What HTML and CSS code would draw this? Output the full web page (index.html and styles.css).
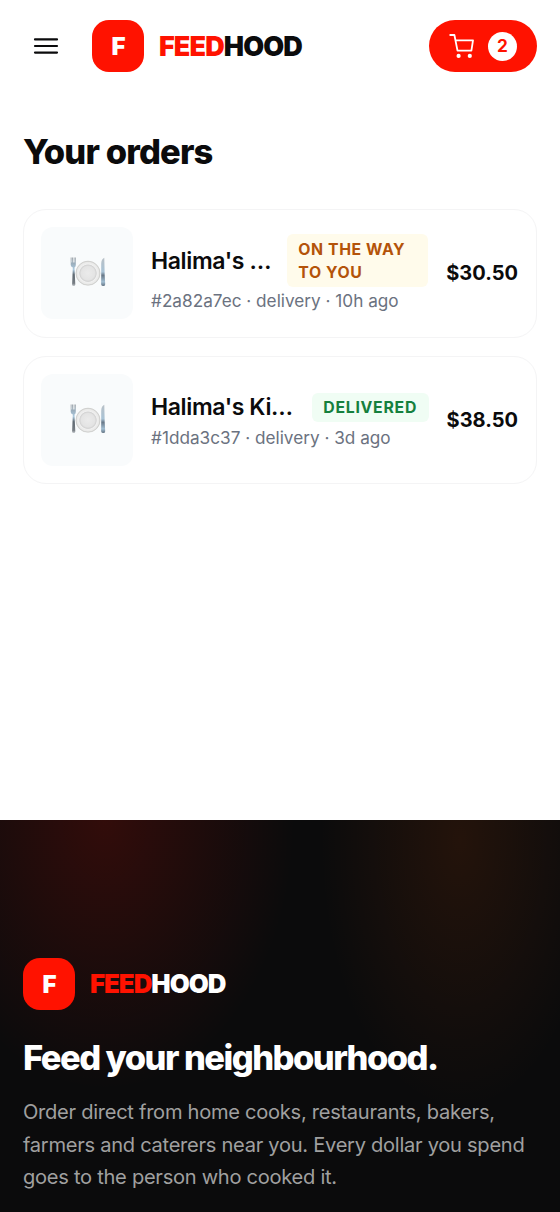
FILE: index.html
```html
<!DOCTYPE html>
<html lang="en">
<head>
<meta charset="utf-8">
<title>Your orders · Feedhood</title>
<link rel="stylesheet" href="styles.css">
</head>
<body>
<header class="topbar">
  <button class="menu" aria-label="Menu">
    <svg width="34" height="34" viewBox="0 0 34 34" fill="none" stroke="currentColor" stroke-width="2.2" stroke-linecap="round"><path d="M6 10.4h22M6 17h22M6 23.6h22"/></svg>
  </button>
  <a class="brand"><span class="mark">F</span><span class="word"><span class="red">FEED</span>HOOD</span></a>
  <button class="cart" aria-label="Cart">
    <svg width="26" height="26" viewBox="0 0 26 26" fill="none" stroke="currentColor" stroke-width="1.8" stroke-linecap="round" stroke-linejoin="round"><path d="M1.2 2h4.2l3.1 15.6h13.9L24 7.4H6.6"/><circle cx="9.6" cy="22.9" r="2.1" fill="currentColor" stroke="none"/><circle cx="20.8" cy="22.9" r="2.1" fill="currentColor" stroke="none"/></svg>
    <span class="count">2</span>
  </button>
</header>
<main class="orders">
  <h1 class="title">Your orders</h1>
  <article class="card">
    <div class="thumb">
      <svg class="plate" width="36" height="36" viewBox="0 0 36 36"><use href="#place-setting"/></svg>
    </div>
    <div class="info">
      <div class="line"><h2 class="name">Halima's Kitchen</h2><span class="badge badge-way">On the way to you</span></div>
      <p class="meta">#2a82a7ec · delivery · 10h ago</p>
    </div>
    <div class="price">$30.50</div>
  </article>
  <article class="card">
    <div class="thumb">
      <svg class="plate" width="36" height="36" viewBox="0 0 36 36">
        <defs>
          <linearGradient id="steel" x1="0" y1="0" x2="0" y2="1"><stop offset="0" stop-color="#8b939a"/><stop offset=".42" stop-color="#abc9df"/><stop offset=".6" stop-color="#606a73"/><stop offset=".9" stop-color="#777d83"/><stop offset="1" stop-color="#c4c8cc"/></linearGradient>
          <linearGradient id="blade" x1="0" y1="0" x2="0" y2="1"><stop offset="0" stop-color="#b9c0c6"/><stop offset=".5" stop-color="#a9c3d6"/><stop offset=".62" stop-color="#687888"/><stop offset=".85" stop-color="#a3bfd3"/><stop offset="1" stop-color="#637281"/></linearGradient>
          <radialGradient id="china"><stop offset="0" stop-color="#ebebeb"/><stop offset=".55" stop-color="#e4e4e4"/><stop offset=".68" stop-color="#d8d8d8"/><stop offset=".74" stop-color="#f0f0f0"/><stop offset=".9" stop-color="#e9e9e8"/><stop offset="1" stop-color="#cfcfcd"/></radialGradient>
          <g id="place-setting">
            <circle cx="18" cy="18.2" r="12.1" fill="url(#china)" stroke="#c4c4c2" stroke-width=".5"/>
            <circle cx="18" cy="18.2" r="8.2" fill="none" stroke="#d0d0d0" stroke-width=".5"/>
            <path d="M.7 2.6h.8v5h.7V2.6h.8v5h.7V2.6h.8v5h.6V2.6h.7v7.5q0 1.8-1.3 2.3l.8 17.1q0 1.6-1.6 1.6t-1.6-1.6l.7-17.1Q.7 12 .7 10.1z" fill="url(#steel)"/>
            <path d="M31.2 20.3V9q0-5 3.1-6.3l.4 17.2.5 9.3q0 1.9-1.9 1.9t-2.2-1.9z" fill="url(#blade)"/>
          </g>
        </defs>
        <use href="#place-setting"/>
      </svg>
    </div>
    <div class="info">
      <div class="line"><h2 class="name">Halima's Kitchen</h2><span class="badge badge-done">Delivered</span></div>
      <p class="meta">#1dda3c37 · delivery · 3d ago</p>
    </div>
    <div class="price">$38.50</div>
  </article>
</main>
<footer class="footer">
  <a class="brand"><span class="mark">F</span><span class="word word-small"><span class="red">FEED</span>HOOD</span></a>
  <h2 class="tagline">Feed your neighbourhood.</h2>
  <p class="blurb">Order direct from home cooks, restaurants, bakers, farmers and caterers near you. Every dollar you spend goes to the person who cooked it.</p>
</footer>
</body>
</html>
```

FILE: styles.css
```css
* { box-sizing: border-box; }
html, body, h1, h2, p { margin: 0; }
body { height: 1212px; overflow: hidden; display: flex; flex-direction: column; background: #fff; color: #0b0b0c; font-family: Inter, "Liberation Sans", sans-serif; }
button { font: inherit; border: 0; background: none; padding: 0; color: inherit; }
.topbar { height: 92px; flex: none; padding: 0 23px 0 29px; display: flex; align-items: center; }
.menu { display: flex; margin-right: 29px; }
.brand { display: flex; align-items: center; gap: 15px; }
.mark { width: 52px; height: 52px; border-radius: 17px; background: #ff1200; color: #fff; display: flex; align-items: center; justify-content: center; padding-left: 1px; font-size: 24px; font-weight: 900; }
.word { font-size: 27px; line-height: 32px; padding-top: 2px; font-weight: 900; letter-spacing: -.9px; }
.word-small { font-size: 25.8px; letter-spacing: -1px; padding-top: 0; }
.red { color: #ff1200; }
.cart { margin-left: auto; width: 108px; height: 52px; border-radius: 26px; padding: 0 20px; background: #ff1200; color: #fff; display: flex; align-items: center; justify-content: space-between; }
.count { width: 29px; height: 29px; border-radius: 50%; background: #fff; color: #ff1200; display: flex; align-items: center; justify-content: center; font-size: 17.2px; font-weight: 700; padding-bottom: 1px; }
.orders { flex: none; height: 728px; padding: 38px 23px 0; display: flex; flex-direction: column; gap: 18px; }
.title { font-size: 34.5px; line-height: 43px; font-weight: 800; letter-spacing: -.86px; margin-bottom: 18px; }
.card { height: 128.5px; padding: 17px 18px 17px 17px; border: 1.4px solid #f4f4f5; border-radius: 23px; display: flex; align-items: center; gap: 18px; }
.thumb { width: 92px; height: 92px; flex: none; border-radius: 12px; background: #f9fbfc; display: flex; align-items: center; justify-content: center; padding-left: 1px; }
.info { flex: 1; min-width: 0; }
.line { display: flex; align-items: center; gap: 11.5px; justify-content: space-between; }
.name { flex: 1; min-width: 0; font-size: 23px; line-height: 34px; font-weight: 600; letter-spacing: -.38px; white-space: nowrap; overflow: hidden; text-overflow: ellipsis; }
.badge { flex: none; padding: 3px 11.5px; border-radius: 6px; font-size: 15.8px; line-height: 23px; font-weight: 700; letter-spacing: .74px; text-transform: uppercase; }
.badge-way { width: 141px; padding: 3.5px 11px; letter-spacing: .6px; background: #fffbeb; color: #b45309; }
.badge-done { background: #f0fdf4; color: #15803d; }
.meta { margin-top: 2px; font-size: 17.2px; line-height: 23px; color: #6b7280; white-space: nowrap; }
.price { font-size: 20px; font-weight: 700; }
.footer { flex: 1; padding: 138px 23px 0; color: #fff; background: radial-gradient(ellipse 190px 270px at 105px 0, rgba(255,18,0,.16), transparent), radial-gradient(ellipse 140px 270px at 460px 20px, rgba(255,90,0,.1), transparent), #0b0b0c; }
.tagline { margin-top: 26px; font-size: 34.5px; line-height: 43px; font-weight: 800; letter-spacing: -1.55px; white-space: nowrap; }
.blurb { margin-top: 17px; font-size: 20.1px; line-height: 32.6px; letter-spacing: -.28px; color: #a0a0a0; }
```
